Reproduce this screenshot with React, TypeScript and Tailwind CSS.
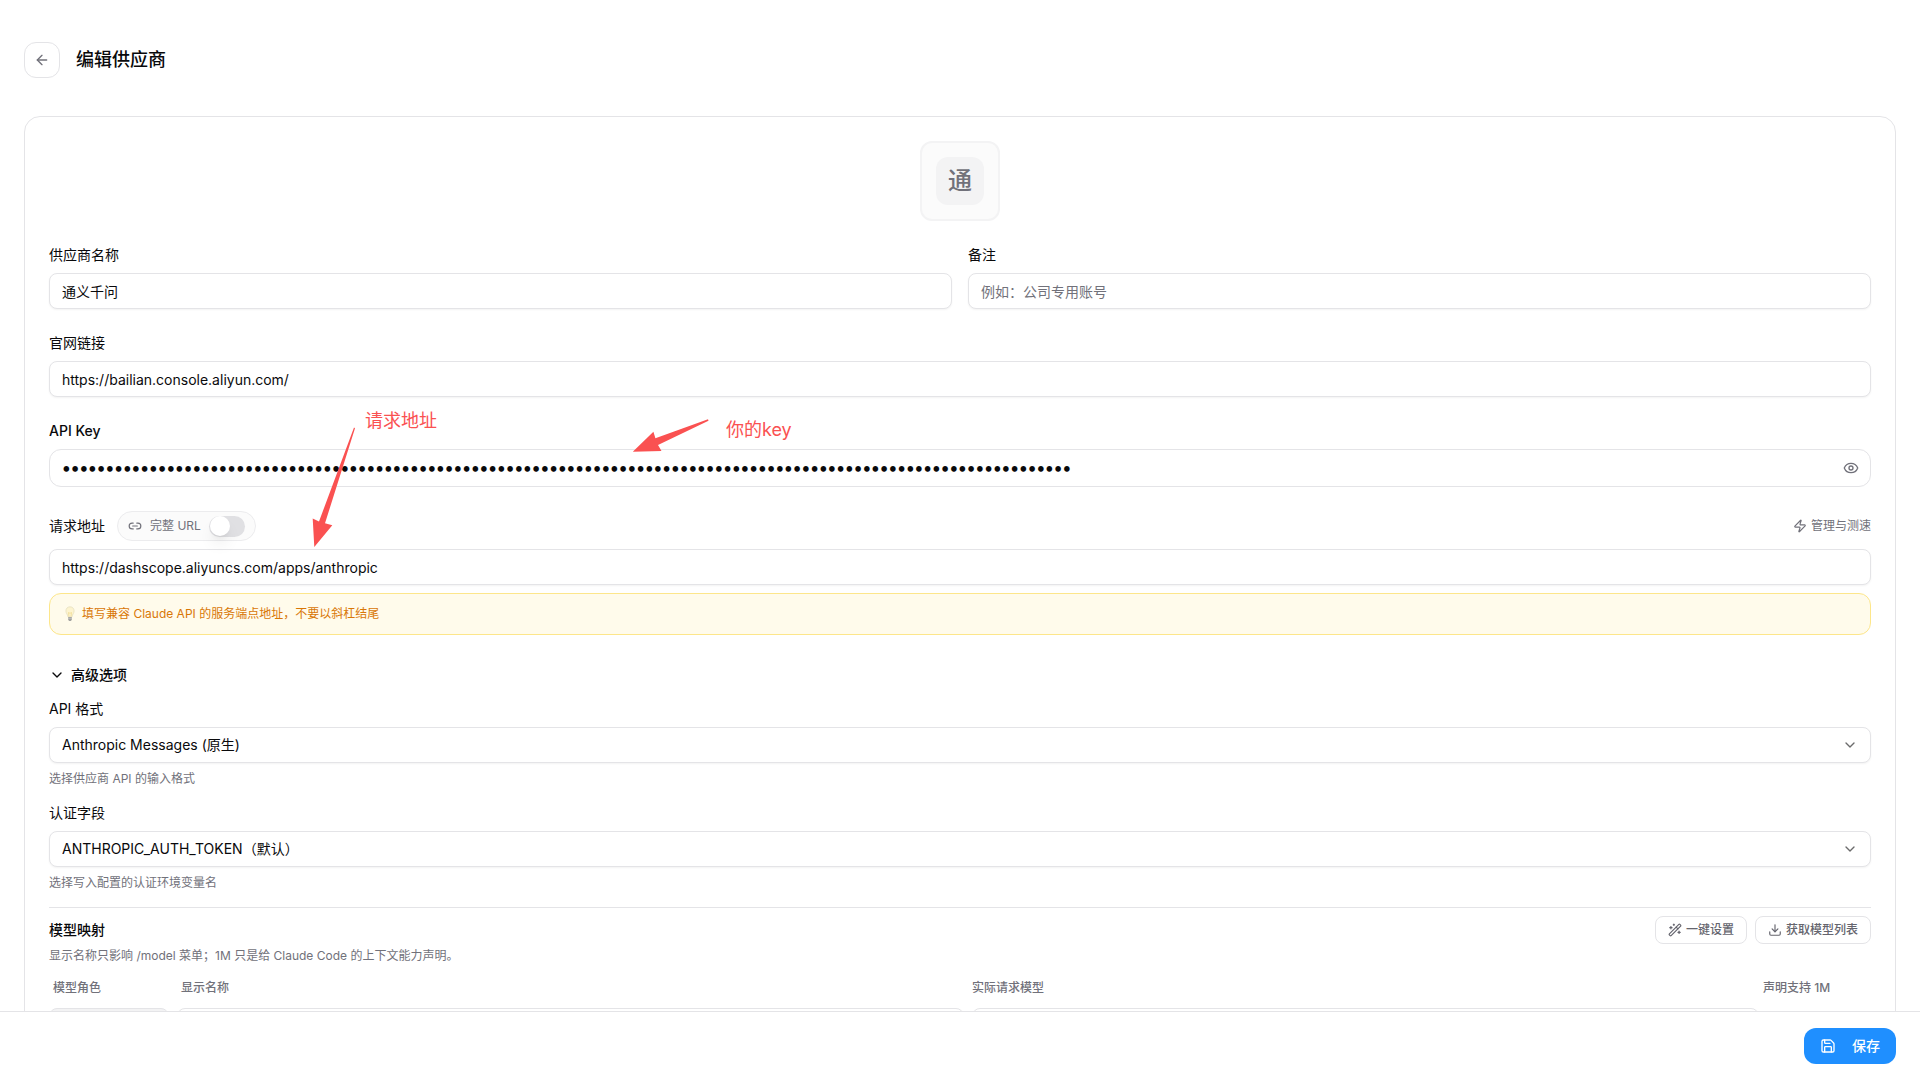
import React, { useState } from "react";
import { ArrowLeft, ChevronDown, Download, Eye, Link2, Save, WandSparkles, Zap } from "lucide-react";

const fieldClass =
  "h-9 w-full rounded-lg border border-[#e4e4e7] bg-white px-3 text-sm text-[#09090b] shadow-xs outline-none placeholder:text-[#71717a]";

function Label({ htmlFor, strong, children }: { htmlFor: string; strong?: boolean; children: React.ReactNode }) {
  return (
    <label htmlFor={htmlFor} className={strong ? "block text-sm font-medium" : "block text-sm"}>
      {children}
    </label>
  );
}

function TextField({
  id,
  label,
  value,
  placeholder,
}: {
  id: string;
  label: string;
  value: string;
  placeholder?: string;
}) {
  return (
    <div className="space-y-2">
      <Label htmlFor={id}>{label}</Label>
      <input id={id} type="text" defaultValue={value} placeholder={placeholder} className={fieldClass} />
    </div>
  );
}

function SelectField({ id, label, option, hint }: { id: string; label: string; option: string; hint: string }) {
  return (
    <div className="space-y-2">
      <Label htmlFor={id}>{label}</Label>
      <div className="relative">
        <select id={id} className={fieldClass + " appearance-none"}>
          <option>{option}</option>
        </select>
        <ChevronDown className="pointer-events-none absolute top-1/2 right-[13px] size-4 -translate-y-1/2 text-[#09090b] opacity-60" />
      </div>
      <p className="text-xs text-[#71717a]">{hint}</p>
    </div>
  );
}

function SmallButton({ icon, children }: { icon: React.ReactNode; children: React.ReactNode }) {
  return (
    <button
      type="button"
      className="flex h-7 items-center gap-1 rounded-lg border border-[#e4e4e7] bg-white px-3 text-xs font-medium text-[#65656e]"
    >
      {icon}
      {children}
    </button>
  );
}

function Bulb() {
  return (
    <svg viewBox="0 0 16 16" className="size-4 shrink-0" aria-hidden="true">
      <path
        d="M8 .8C5.500.8 3.900 2.600 3.900 4.900c0 2.200 1.700 3.500 2.100 6h4c.4-2.500 2.100-3.800 2.100-6C12.100 2.600 10.500.8 8 .8z"
        fill="#fdf4cf"
        stroke="#e6dfc0"
        strokeWidth="0.8"
      />
      <path d="M7 10.500 6.500 6.500 8 7.300l1.500-.8-.5 4" fill="none" stroke="#efd98c" strokeWidth="0.700" />
      <path d="M6.200 11h3.600v2.600L9 15H7l-.8-1.400z" fill="#a3a3a0" />
      <path d="M6.200 12.300h3.600" stroke="#d4d4d0" strokeWidth="0.600" />
    </svg>
  );
}

function Annotations() {
  return (
    <div className="pointer-events-none absolute inset-0 text-lg leading-6 text-[#fa5151]">
      <svg className="absolute top-0 left-0 h-[600px] w-[800px]" viewBox="0 0 800 600" fill="#fa5151" aria-hidden="true">
        <path d="M354 427.500 319 521.500 312.700 518.500 314.300 547 332.300 525.300 325 523.300 355 428.300z" />
        <path d="M708 419.300 655.400 438.300 653.400 431.700 632.800 451.700 661.500 451 658 445 708.500 420.700z" />
      </svg>
      <span className="absolute top-[409px] left-[365px]">请求地址</span>
      <span className="absolute top-[418px] left-[726px]">你的key</span>
    </div>
  );
}

export default function App() {
  const [fullUrl, setFullUrl] = useState(false);

  return (
    <div className="relative flex h-screen flex-col overflow-hidden bg-white font-['Inter','Noto_Sans_CJK_SC',sans-serif] text-[#09090b]">
      <header className="flex shrink-0 items-center gap-4 px-6 pt-[42px] pb-[38px]">
        <button
          type="button"
          aria-label="返回"
          className="flex size-9 items-center justify-center rounded-xl border border-[#e4e4e7] text-[#71717a]"
        >
          <ArrowLeft className="size-4" />
        </button>
        <h1 className="text-lg font-medium">编辑供应商</h1>
      </header>

      <main className="min-h-0 flex-1 overflow-hidden px-6">
        <form className="space-y-6 rounded-2xl border border-[#e4e4e7] p-6">
          <div className="flex justify-center">
            <button
              type="button"
              className="flex size-20 items-center justify-center rounded-xl border-2 border-[#f3f3f4] bg-[#fbfbfb]"
            >
              <span className="flex size-12 items-center justify-center rounded-xl bg-[#f3f3f4] text-2xl font-medium text-[#71717a]">
                通
              </span>
            </button>
          </div>

          <div className="grid grid-cols-2 gap-4">
            <TextField id="name" label="供应商名称" value="通义千问" />
            <TextField id="notes" label="备注" value="" placeholder="例如：公司专用账号" />
          </div>

          <TextField id="website" label="官网链接" value="https://bailian.console.aliyun.com/" />

          <div className="space-y-2">
            <Label htmlFor="key" strong>
              API Key
            </Label>
            <div className="relative">
              <input
                id="key"
                type="password"
                defaultValue={"x".repeat(116)}
                className="block h-[38px] w-full rounded-xl border border-[#e4e4e7] bg-white pr-10 pl-3 font-['Lato',sans-serif] text-[15px] outline-none"
              />
              <button type="button" aria-label="显示" className="absolute inset-y-0 right-3 flex items-center text-[#71717a]">
                <Eye className="size-4" />
              </button>
            </div>
          </div>

          <div className="space-y-2">
            <div className="flex items-center justify-between">
              <div className="flex items-center gap-3">
                <Label htmlFor="endpoint">请求地址</Label>
                <div className="flex h-[30px] items-center rounded-full border border-[#ececee] bg-[#fbfbfb] px-2.5 text-[#71717a]">
                  <Link2 className="size-3.5" />
                  <label htmlFor="full-url" className="mx-2 text-xs">
                    完整 URL
                  </label>
                  <input
                    id="full-url"
                    type="checkbox"
                    role="switch"
                    checked={fullUrl}
                    onChange={(e) => setFullUrl(e.target.checked)}
                    className="flex h-[21px] w-9 appearance-none items-center rounded-full bg-[#e0e0e3] px-px before:size-5 before:rounded-full before:bg-white before:shadow-lg checked:justify-end checked:bg-[#1f8fff]"
                  />
                </div>
              </div>
              <button type="button" className="flex items-center gap-1 text-xs text-[#71717a]">
                <Zap className="size-3.5" />
                管理与测速
              </button>
            </div>
            <input
              id="endpoint"
              type="text"
              defaultValue="https://dashscope.aliyuncs.com/apps/anthropic"
              className={fieldClass + " block"}
            />
            <div className="flex items-center gap-1 rounded-xl border border-[#fde68a] bg-[#fffbeb] p-3 text-xs text-[#d97706]">
              <Bulb />
              <p>填写兼容 Claude API 的服务端点地址，不要以斜杠结尾</p>
            </div>
          </div>

          <section>
            <button type="button" className="flex h-8 items-center gap-1.5 text-sm font-medium">
              <ChevronDown className="size-4" />
              高级选项
            </button>
            <div className="mt-2 space-y-4">
              <SelectField
                id="format"
                label="API 格式"
                option="Anthropic Messages (原生)"
                hint="选择供应商 API 的输入格式"
              />
              <SelectField
                id="auth"
                label="认证字段"
                option="ANTHROPIC_AUTH_TOKEN（默认）"
                hint="选择写入配置的认证环境变量名"
              />
              <div className="border-t border-[#e4e4e7] pt-2">
                <div className="flex items-center justify-between">
                  <h2 className="text-sm font-medium">模型映射</h2>
                  <div className="flex gap-2">
                    <SmallButton icon={<WandSparkles className="size-3.5" />}>一键设置</SmallButton>
                    <SmallButton icon={<Download className="size-3.5" />}>获取模型列表</SmallButton>
                  </div>
                </div>
                <p className="mt-1 text-xs text-[#71717a]">
                  显示名称只影响 /model 菜单；1M 只是给 Claude Code 的上下文能力声明。
                </p>
                <div className="mt-4 grid grid-cols-[120px_1fr_1fr_112px] gap-2 text-xs font-medium text-[#71717a]">
                  <span className="px-1">模型角色</span>
                  <span className="px-1">显示名称</span>
                  <span className="px-1">实际请求模型</span>
                  <span className="px-1">声明支持 1M</span>
                </div>
                <div className="mt-3 grid grid-cols-[120px_1fr_1fr_104px] gap-2">
                  <div className="h-9 rounded-lg border border-[#e4e4e7] bg-[#f3f3f4]" />
                  <input aria-label="显示名称" className={fieldClass} />
                  <input aria-label="实际请求模型" className={fieldClass} />
                </div>
              </div>
            </div>
          </section>
        </form>
      </main>

      <footer className="flex shrink-0 justify-end border-t border-[#e4e4e7] bg-white px-6 py-4">
        <button
          type="button"
          className="flex h-9 items-center gap-4 rounded-xl bg-[#1f8fff] px-4 text-sm font-medium text-white"
        >
          <Save className="size-4" />
          保存
        </button>
      </footer>

      <Annotations />
    </div>
  );
}
